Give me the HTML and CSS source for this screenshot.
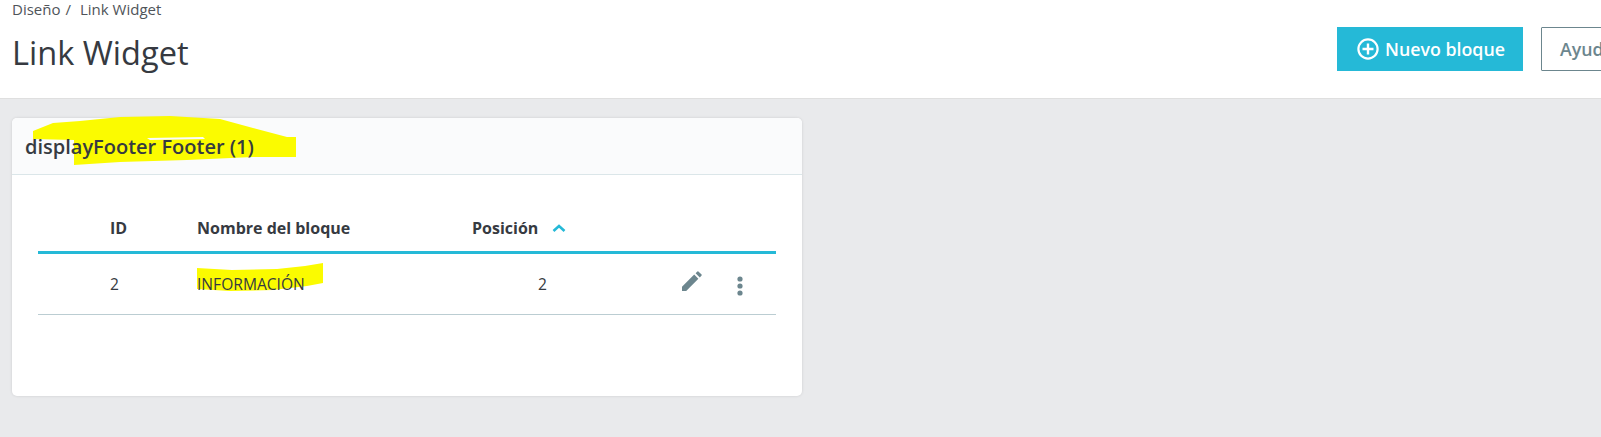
FILE: index.html
```html
<!DOCTYPE html>
<html lang="en">
<head>
    <meta charset="UTF-8">
    <title>Link Widget</title>
    <link rel="stylesheet" href="styles.css">
</head>
<body>
    <!-- Page header -->
    <header class="page-head">
        <div class="breadcrumb"><span>Diseño</span><span class="sep">/</span><span>Link Widget</span></div>
        <div class="head-row">
            <h1>Link Widget</h1>
            <div class="toolbar">
                <button class="btn-new">
                    <svg class="plus" width="22" height="22" viewBox="0 0 22 22"><circle cx="11" cy="11" r="9.6" fill="none" stroke="#fff" stroke-width="2.2"/><path d="M11 5.500v11M5.500 11h11" stroke="#fff" stroke-width="2.4"/></svg>
                    Nuevo bloque
                </button>
                <button class="btn-help">Ayuda</button>
            </div>
        </div>
    </header>

    <main class="content">
        <section class="card">
            <div class="card-head">
                <svg class="marker marker-title" width="264" height="52" viewBox="0 0 264 52"><path fill-rule="evenodd" d="M0 16L20 8 47 6 87 2 137 1 187 4 220 13 254 22 263 22 263 42 220 42 154 45 87 47 41 50 41 25 0 24ZM114 23L170 22 172 24 117 25Z" fill="#fbfb00"/></svg>
                <h2>displayFooter Footer (1)</h2>
            </div>
            <div class="card-body">
                <table>
                    <thead>
                        <tr>
                            <th class="col-id">ID</th>
                            <th class="col-name">Nombre del bloque</th>
                            <th class="col-pos">Posición <svg class="caret" width="14" height="8" viewBox="0 0 14 8"><path d="M1.5 7L7 2l5.5 5" fill="none" stroke="#25b9d7" stroke-width="2.6"/></svg></th>
                            <th class="col-actions"></th>
                        </tr>
                    </thead>
                    <tbody>
                        <tr>
                            <td>2</td>
                            <td class="name-cell">
                                <svg class="marker marker-name" width="127" height="28" viewBox="0 0 127 28"><path d="M0 5L35 7 80 6 108 3 126 0 126 20 110 23 76 27 33 28 0 26Z" fill="#fbfb00"/></svg>
                                <span>INFORMACIÓN</span>
                            </td>
                            <td class="pos-cell">2</td>
                            <td>
                                <div class="actions">
                                    <svg class="edit" width="20" height="20" viewBox="0 0 20 20"><path d="M0 20v-4.2L12.2 3.600l4.200 4.200L4.200 20ZM13.600 2.200 15.400.4q.5-.4 1 0l3.200 3.200q.4.5 0 1L17.800 6.400Z" fill="#6c868e"/></svg>
                                    <svg class="dots" width="6" height="20" viewBox="0 0 6 20"><circle cx="3" cy="3" r="2.600" fill="#6c868e"/><circle cx="3" cy="10" r="2.600" fill="#6c868e"/><circle cx="3" cy="17" r="2.600" fill="#6c868e"/></svg>
                                </div>
                            </td>
                        </tr>
                    </tbody>
                </table>
            </div>
        </section>
    </main>
</body>
</html>
```

FILE: styles.css
```css
html, body {
    margin: 0;
    height: 100%;
    overflow: hidden;
}

body {
    background-color: #e9eaec;
    font-family: "Open Sans", Arial, sans-serif;
    color: #363a41;
}

.page-head {
    height: 98px;
    background-color: #fff;
    border-bottom: 1px solid #dfdfdf;
    padding-left: 12px;
    overflow: hidden;
}

.breadcrumb {
    display: flex;
    height: 18px;
    font-size: 15px;
    line-height: 18px;
    color: #4f5459;
}

.sep {
    margin: 0 9px 0 5px;
}

.head-row {
    display: flex;
    justify-content: space-between;
    height: 80px;
}

h1 {
    margin: 13px 0 0;
    font-size: 32.6px;
    font-weight: 400;
    line-height: 44px;
}

.toolbar {
    display: flex;
    flex-shrink: 0;
    gap: 18px;
    margin-top: 9px;
    margin-right: -50px;
}

.toolbar button {
    height: 44px;
    font-family: inherit;
    font-size: 17.8px;
}

.btn-new {
    display: flex;
    align-items: center;
    gap: 6px;
    width: 186px;
    padding: 0 0 0 20px;
    border: none;
    background-color: #25b9d7;
    color: #fff;
    font-weight: 600;
}

.btn-help {
    width: 110px;
    padding: 0 0 0 18px;
    border: 1px solid #6c868e;
    border-radius: 1px;
    background-color: #fff;
    color: #6c868e;
    font-weight: 600;
    text-align: left;
}

.content {
    padding: 19px 0 0 12px;
}

.card {
    width: 790px;
    height: 278px;
    background-color: #fff;
    border-radius: 5px;
    box-shadow: 0 0 3px rgba(0, 0, 0, 0.12);
}

.card-head {
    position: relative;
    height: 57px;
    background-color: #fafbfc;
    border-bottom: 1px solid #dbe6e9;
    border-radius: 5px 5px 0 0;
    box-sizing: border-box;
    padding-left: 13px;
}

.card-head h2 {
    position: relative;
    margin: 0;
    font-size: 20px;
    font-weight: 600;
    line-height: 57px;
}

.marker {
    position: absolute;
}

.marker-title {
    left: 21px;
    top: -3px;
}

.card-body {
    padding: 29px 26px 0;
}

table {
    width: 738px;
    border-collapse: collapse;
    table-layout: fixed;
}

th {
    height: 47px;
    padding: 0;
    border-bottom: 3px solid #25b9d7;
    font-size: 16px;
    font-weight: 700;
    text-align: left;
}

td {
    height: 60px;
    padding: 0;
    border-bottom: 1px solid #bbcdd2;
    font-size: 15.6px;
}

th:first-child, td:first-child {
    padding-left: 72px;
}

.col-id {
    width: 87px;
}

.col-name {
    width: 275px;
}

.col-pos {
    width: 201px;
}

.caret {
    margin-left: 10px;
    vertical-align: 2px;
}

.name-cell {
    position: relative;
}

.name-cell span {
    position: relative;
}

.marker-name {
    left: 0;
    top: 9px;
}

.pos-cell {
    padding-left: 66px;
}

.actions {
    display: flex;
    align-items: center;
    gap: 35px;
    padding-left: 9px;
}

.edit {
    margin-bottom: 6px;
}

.dots {
    margin-top: 4px;
}
```
